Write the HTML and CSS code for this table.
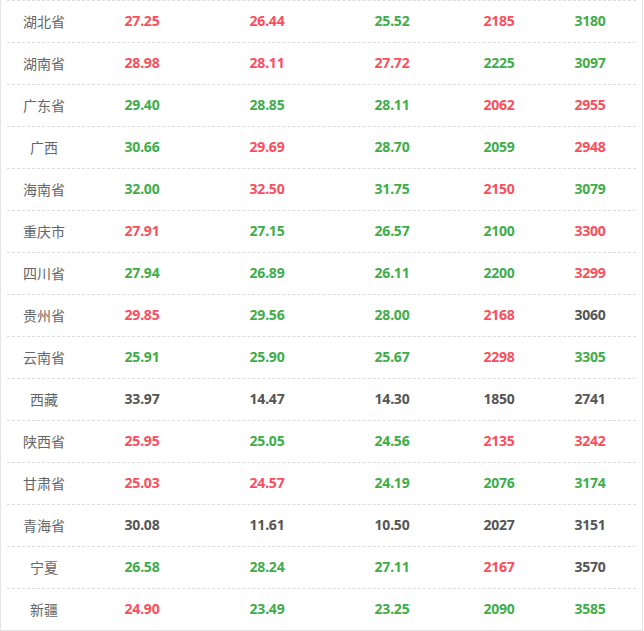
FILE: index.html
```html
<!DOCTYPE html>
<html lang="zh">
<head>
<meta charset="utf-8">
<link rel="stylesheet" href="styles.css">
</head>
<body>
<div class="panel">
  <div class="table" id="tbl">
    <div class="row"><span class="prov">湖北省</span><span class="r">27.25</span><span class="r">26.44</span><span class="g">25.52</span><span class="r">2185</span><span class="g">3180</span></div>
    <div class="row"><span class="prov">湖南省</span><span class="r">28.98</span><span class="r">28.11</span><span class="r">27.72</span><span class="g">2225</span><span class="g">3097</span></div>
    <div class="row"><span class="prov">广东省</span><span class="g">29.40</span><span class="g">28.85</span><span class="g">28.11</span><span class="r">2062</span><span class="r">2955</span></div>
    <div class="row"><span class="prov">广西</span><span class="g">30.66</span><span class="r">29.69</span><span class="g">28.70</span><span class="g">2059</span><span class="r">2948</span></div>
    <div class="row"><span class="prov">海南省</span><span class="g">32.00</span><span class="r">32.50</span><span class="g">31.75</span><span class="r">2150</span><span class="g">3079</span></div>
    <div class="row"><span class="prov">重庆市</span><span class="r">27.91</span><span class="g">27.15</span><span class="g">26.57</span><span class="g">2100</span><span class="r">3300</span></div>
    <div class="row"><span class="prov">四川省</span><span class="g">27.94</span><span class="g">26.89</span><span class="g">26.11</span><span class="g">2200</span><span class="r">3299</span></div>
    <div class="row"><span class="prov">贵州省</span><span class="r">29.85</span><span class="g">29.56</span><span class="g">28.00</span><span class="r">2168</span><span class="n">3060</span></div>
    <div class="row"><span class="prov">云南省</span><span class="g">25.91</span><span class="g">25.90</span><span class="g">25.67</span><span class="r">2298</span><span class="g">3305</span></div>
    <div class="row"><span class="prov">西藏</span><span class="n">33.97</span><span class="n">14.47</span><span class="n">14.30</span><span class="n">1850</span><span class="n">2741</span></div>
    <div class="row"><span class="prov">陕西省</span><span class="r">25.95</span><span class="g">25.05</span><span class="g">24.56</span><span class="r">2135</span><span class="r">3242</span></div>
    <div class="row"><span class="prov">甘肃省</span><span class="r">25.03</span><span class="r">24.57</span><span class="g">24.19</span><span class="g">2076</span><span class="g">3174</span></div>
    <div class="row"><span class="prov">青海省</span><span class="n">30.08</span><span class="n">11.61</span><span class="n">10.50</span><span class="n">2027</span><span class="n">3151</span></div>
    <div class="row"><span class="prov">宁夏</span><span class="g">26.58</span><span class="g">28.24</span><span class="g">27.11</span><span class="r">2167</span><span class="n">3570</span></div>
    <div class="row"><span class="prov">新疆</span><span class="r">24.90</span><span class="g">23.49</span><span class="g">23.25</span><span class="g">2090</span><span class="g">3585</span></div>
  </div>
</div>
</body>
</html>
```
FILE: styles.css
```css
html, body {
  margin: 0;
  padding: 0;
  background: #fff;
}
.panel {
  border-left: 1px solid #e4e4e4;
  border-right: 1px solid #e4e4e4;
  border-bottom: 1px solid #e4e4e4;
  padding: 0 6px;
  box-sizing: content-box;
  width: 629px;
  font-family: "Noto Sans", "Noto Sans CJK SC", sans-serif;
  font-size: 14px;
}
.table {
  border-top: 1px dashed #dcdcdc;
}
.row {
  display: grid;
  grid-template-columns: 72px 126px 124px 126px 88px 94px;
  height: 42px;
  box-sizing: border-box;
  padding-bottom: 2px;
  align-items: center;
  border-bottom: 1px dashed #dcdcdc;
}
.row:last-child {
  border-bottom: none;
  height: 41px;
}
.row span {
  text-align: center;
  font-weight: 700;
  letter-spacing: -0.2px;
}
.row .prov {
  font-family: "Noto Sans CJK SC", sans-serif;
  font-weight: 400;
  color: #666;
  letter-spacing: 0;
  padding-left: 2px;
}
.r { color: #fb4e5c; }
.g { color: #3fad4a; }
.n { color: #555; }
```
